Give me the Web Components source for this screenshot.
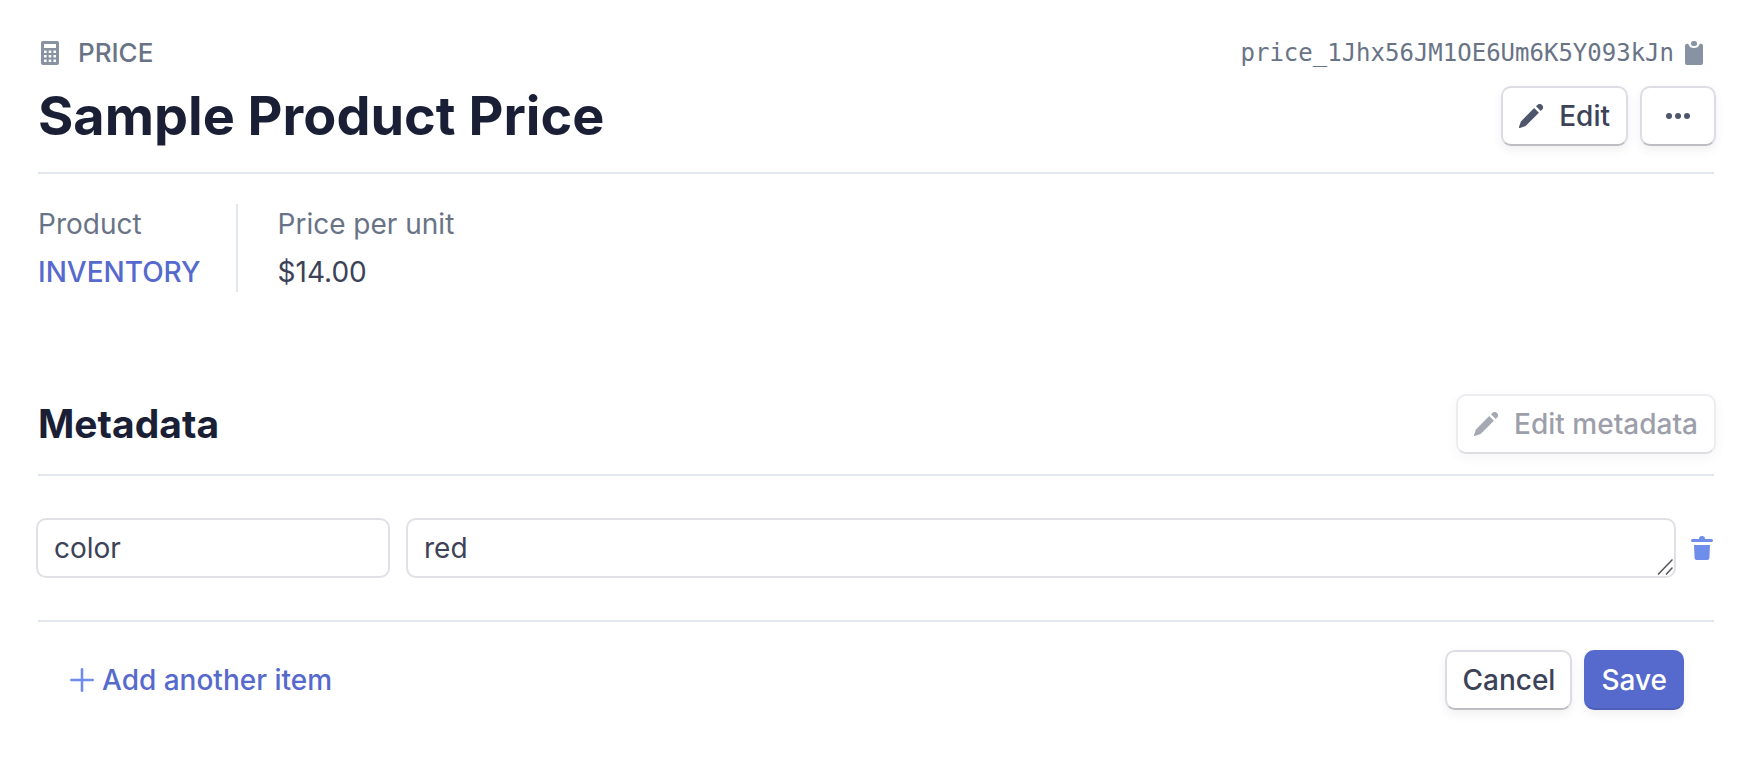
<!DOCTYPE html>
<html lang="en">
<head>
<meta charset="utf-8">
<title>Sample Product Price</title>
<style>
  body {
    margin: 0;
    background: #fff;
    color: #3c4257;
    font: 400 28px/40px Inter, "Liberation Sans", sans-serif;
  }
</style>
</head>
<body>
<price-page></price-page>

<script>
const define = (name, html, setup) => {
  const template = document.createElement("template");
  template.innerHTML = html;
  customElements.define(name, class extends HTMLElement {
    constructor() {
      super();
      this.attachShadow({ mode: "open" }).append(template.content.cloneNode(true));
    }
    connectedCallback() {
      if (setup) setup(this, this.shadowRoot);
    }
  });
};

const ICONS = {
  calculator: `<path fill-rule="evenodd" d="M5 0h14a2 2 0 0 1 2 2v20a2 2 0 0 1-2 2H5a2 2 0 0 1-2-2V2a2 2 0 0 1 2-2zM6 3v4h12V3zM6 9.500v2.600h2.600V9.500zm4.700 0v2.600h2.600V9.500zm4.700 0v2.600H18V9.500zM6 14v2.600h2.600V14zm4.700 0v2.600h2.600V14zm4.700 0v2.600H18V14zM6 18.500v2.600h2.600v-2.600zm4.700 0v2.600h2.600v-2.600zm4.700 0v2.600H18v-2.600z"/>`,
  clipboard: `<path d="M6.300 2.800a5.800 5.200 0 0 0 11.400 0H19a2 2 0 0 1 2 2V22a2 2 0 0 1-2 2H5a2 2 0 0 1-2-2V4.800a2 2 0 0 1 2-2z"/><rect x="9" y="0" width="6" height="5" rx="2.500"/>`,
  pencil: `<path d="M15.200 4.100l4.700 4.700L6.600 22.100 .9 24a.7.7 0 0 1-.9-.9l1.900-5.700zM17 2.300l1.300-1.300a3.300 3.300 0 0 1 4.700 4.700L21.700 7z"/>`,
  more: `<circle cx="3" cy="12" r="3"/><circle cx="12" cy="12" r="3"/><circle cx="21" cy="12" r="3"/>`,
  plus: `<path d="M12 1.300v21.400M1.300 12h21.400" fill="none" stroke="currentColor" stroke-width="2.600" stroke-linecap="round"/>`,
  trash: `<path d="M9 3a3 3 0 0 1 6 0h6.500a1.500 1.500 0 0 1 0 3h-19a1.500 1.500 0 0 1 0-3zM4 9h16l-.6 13.200a2 2 0 0 1-2 1.800H6.600a2 2 0 0 1-2-1.800z"/>`
};

define("ui-icon", `
  <style>
    :host { display: block; flex: none; width: 24px; height: 24px; }
    svg { display: block; width: 24px; height: 24px; fill: currentColor; }
  </style>
  <svg viewBox="0 0 24 24" aria-hidden="true"></svg>`,
  (host, root) => { root.querySelector("svg").innerHTML = ICONS[host.getAttribute("name")]; });

define("ui-button", `
  <style>
    :host { display: block; flex: none; }
    button {
      display: flex; align-items: center; justify-content: center; gap: 16px;
      box-sizing: border-box; height: 60px; margin: 0; padding: 0 15px;
      border: 2px solid #dcdde4; border-bottom-color: #bdbec4; border-radius: 10px;
      background: #fff; color: #3c4257; font: inherit; font-weight: 500;
      box-shadow: 0 4px 10px rgba(60, 66, 87, .08);
    }
    ::slotted(ui-icon) { color: #4f566b; }
    :host([with-icon]) button { padding: 0 16px; }
    :host([icon-only]) button { width: 76px; }
    button:disabled { opacity: .5; }
    :host([primary]) button {
      border-color: #566acd; border-bottom-color: #4d5fb6;
      background: #566acd; color: #fff;
    }
  </style>
  <button type="button"><slot></slot></button>`,
  (host, root) => {
    const button = root.querySelector("button");
    button.disabled = host.hasAttribute("disabled");
    if (host.hasAttribute("label")) button.setAttribute("aria-label", host.getAttribute("label"));
  });

define("object-header", `
  <style>
    :host { display: block; padding-bottom: 26px; border-bottom: 2px solid #e3e8ee; }
    .row { display: flex; align-items: center; justify-content: space-between; }
    .kind { display: flex; align-items: center; gap: 16px; color: #697386; font-size: 26px; font-weight: 500; }
    .kind ui-icon, .id ui-icon { color: #8792a2; }
    .id {
      display: flex; align-items: center; gap: 8px; margin: 0 8px 0 0; padding: 0;
      border: 0; background: none; color: #697386;
      font: 24px/40px "DejaVu Sans Mono", "Liberation Mono", monospace;
    }
    h1 { margin: 0; color: #1a1f36; font-size: 54px; font-weight: 700; line-height: 60px; }
    .title { margin: 13px -2px 0 0; }
    .actions { display: flex; gap: 12px; }
  </style>
  <div class="row">
    <div class="kind"><ui-icon name="calculator"></ui-icon><slot name="kind"></slot></div>
    <button class="id" type="button"><slot name="id"></slot><ui-icon name="clipboard"></ui-icon></button>
  </div>
  <div class="row title">
    <h1><slot></slot></h1>
    <div class="actions"><slot name="actions"></slot></div>
  </div>`);

define("summary-item", `
  <style>
    :host { display: block; padding-right: 35px; }
    :host(:not(:first-child)) { border-left: 2px solid #e3e8ee; padding-left: 40px; }
    dl { margin: 0; }
    dt { color: #697386; }
    dd { margin: 8px 0 0; }
    ::slotted(a) { color: #566acd; font-weight: 500; text-decoration: none; }
  </style>
  <dl><dt><slot name="label"></slot></dt><dd><slot></slot></dd></dl>`);

define("metadata-row", `
  <style>
    :host { display: flex; align-items: center; margin: 42px 0 42px -2px; }
    input, textarea {
      display: block; box-sizing: border-box; height: 60px; margin: 0; padding: 8px 16px;
      border: 2px solid #e0e0e6; border-radius: 10px; background: #fff;
      color: #3c4257; font: inherit;
    }
    input { flex: none; width: 354px; }
    .value { position: relative; flex: 1; min-width: 0; margin: 0 14px 0 16px; }
    textarea { width: 100%; resize: vertical; overflow: hidden; }
    textarea::-webkit-resizer { background: transparent; }
    .grip {
      position: absolute; right: 3px; bottom: 3px; width: 16px; height: 16px;
      fill: none; stroke: #555; stroke-width: 1.5; pointer-events: none;
    }
    button { margin: 0; padding: 0; border: 0; background: none; color: #6f8eeb; }
  </style>
  <input type="text" aria-label="Key">
  <div class="value">
    <textarea rows="1" aria-label="Value"></textarea>
    <svg class="grip" viewBox="0 0 16 16" aria-hidden="true"><path d="M1 15.500L15.500 .5M9 15.500l6.500-7"/></svg>
  </div>
  <button type="button" aria-label="Remove item"><ui-icon name="trash"></ui-icon></button>`,
  (host, root) => {
    root.querySelector("input").value = host.getAttribute("key");
    root.querySelector("textarea").value = host.getAttribute("value");
  });

define("metadata-section", `
  <style>
    :host { display: block; }
    header {
      display: flex; align-items: center; justify-content: space-between;
      padding-bottom: 20px; border-bottom: 2px solid #e3e8ee;
    }
    header ui-button { margin-right: -2px; }
    h2 { margin: 0; color: #1a1f36; font-size: 39px; font-weight: 700; line-height: 48px; }
    footer {
      display: flex; align-items: center; justify-content: space-between;
      padding: 28px 30px 28px 32px; border-top: 2px solid #e3e8ee;
    }
    .add {
      display: flex; align-items: center; gap: 8px; margin: 0; padding: 0;
      border: 0; background: none; color: #566acd; font: inherit; font-weight: 500;
    }
    .add ui-icon { color: #6f8eeb; }
    .actions { display: flex; gap: 12px; }
  </style>
  <header>
    <h2>Metadata</h2>
    <ui-button with-icon disabled><ui-icon name="pencil"></ui-icon>Edit metadata</ui-button>
  </header>
  <slot></slot>
  <footer>
    <button class="add" type="button"><ui-icon name="plus"></ui-icon>Add another item</button>
    <div class="actions">
      <ui-button>Cancel</ui-button>
      <ui-button primary>Save</ui-button>
    </div>
  </footer>`);

define("price-page", `
  <style>
    :host { display: block; padding: 33px 32px 32px 38px; }
    .summary { display: flex; margin: 30px 0 102px; }
  </style>
  <object-header>
    <span slot="kind">PRICE</span>
    <span slot="id">price_1Jhx56JM1OE6Um6K5Y093kJn</span>
    Sample Product Price
    <ui-button slot="actions" with-icon><ui-icon name="pencil"></ui-icon>Edit</ui-button>
    <ui-button slot="actions" icon-only label="More actions"><ui-icon name="more"></ui-icon></ui-button>
  </object-header>
  <div class="summary">
    <summary-item><span slot="label">Product</span><a href="#inventory">INVENTORY</a></summary-item>
    <summary-item><span slot="label">Price per unit</span>$14.00</summary-item>
  </div>
  <metadata-section>
    <metadata-row key="color" value="red"></metadata-row>
  </metadata-section>`);
</script>
</body>
</html>
